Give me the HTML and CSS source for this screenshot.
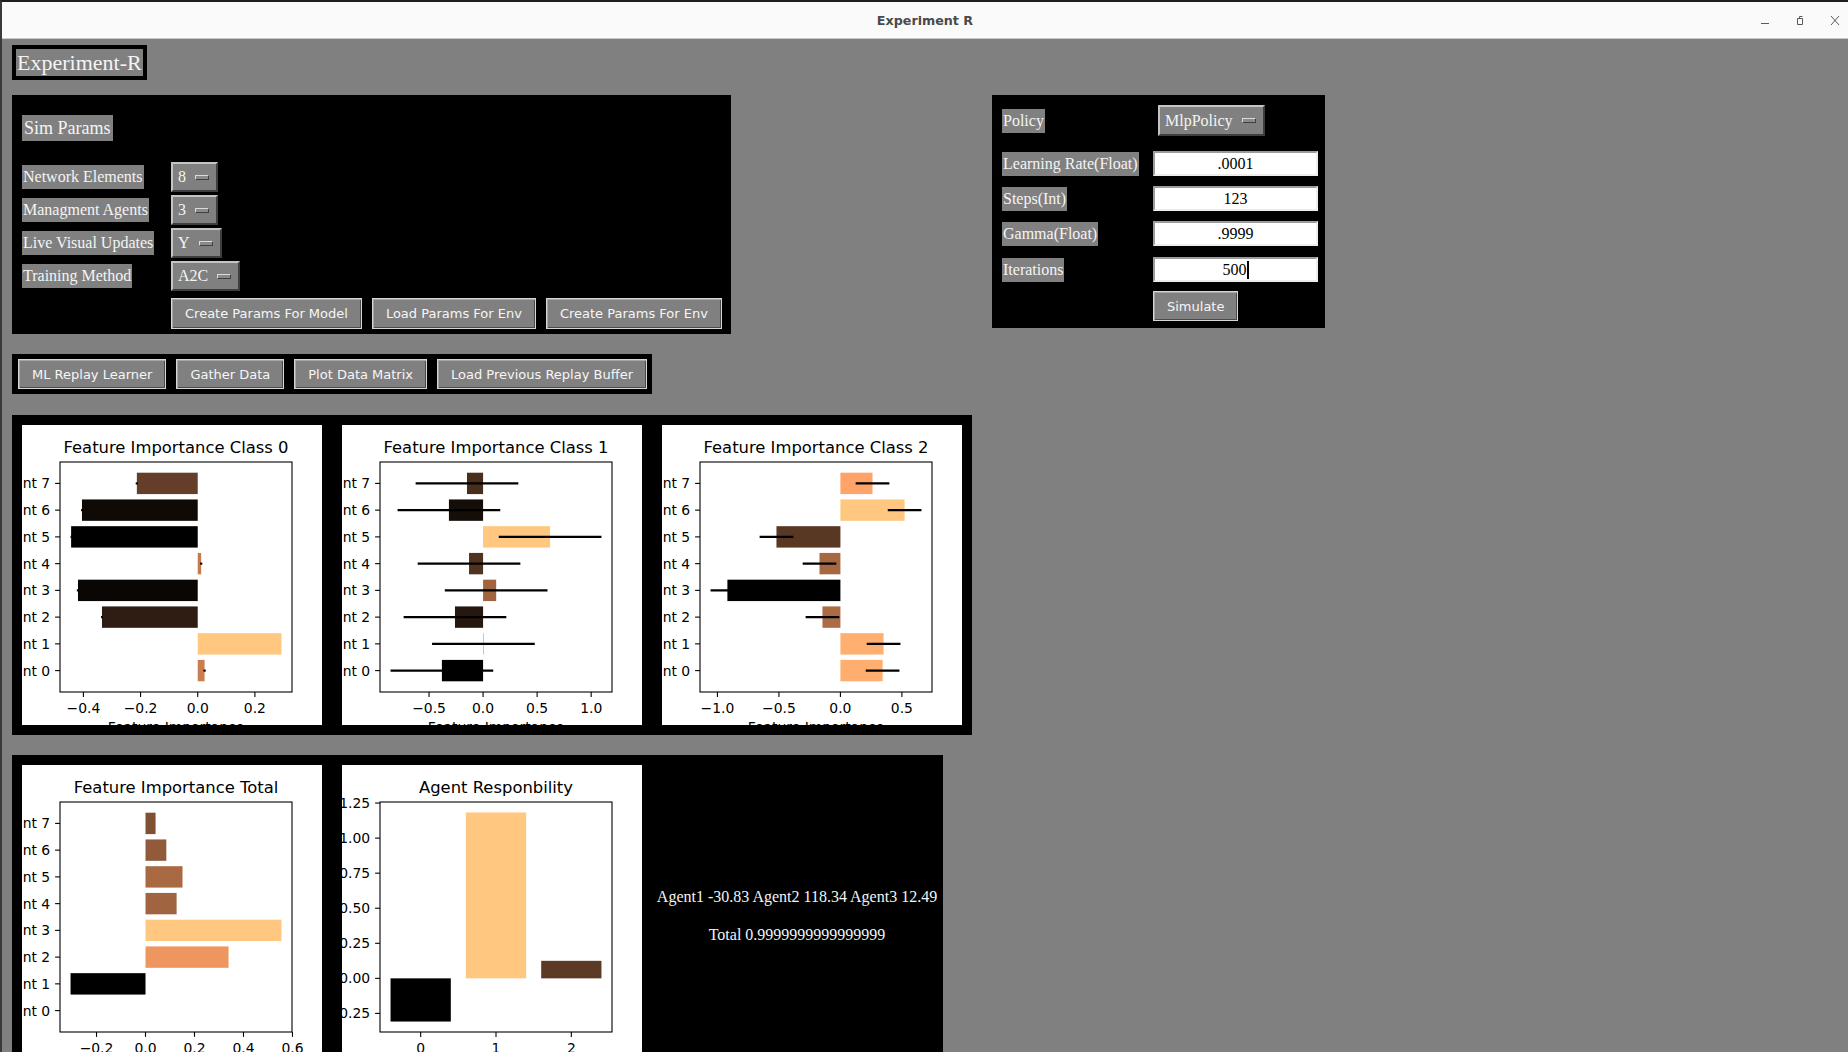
FILE: index.html
```html
<!DOCTYPE html>
<html lang="en">
<head>
<meta charset="utf-8">
<title>Experiment R</title>
<link rel="stylesheet" href="styles.css">
</head>
<body>
<div class="window">
  <header class="titlebar">
    <div class="title">Experiment R</div>
    <div class="wctl">
      <svg class="wc" width="20" height="20" viewBox="0 0 20 20"><path d="M6 13.5H14" stroke="#5a5a5a" stroke-width="1"/></svg>
      <svg class="wc" width="20" height="20" viewBox="0 0 20 20"><path d="M7.5 8.5H12.5V14.5H7.5Z M9.5 8.5V6.5H12.5" fill="none" stroke="#5a5a5a" stroke-width="1"/></svg>
      <svg class="wc" width="20" height="20" viewBox="0 0 20 20"><path d="M6 6L14 15M14 6L6 15" stroke="#5a5a5a" stroke-width="1"/></svg>
    </div>
  </header>
  <main class="app">
    <div class="app-title"><span class="lbl lbl-app">Experiment-R</span></div>

    <div class="top-row">
      <section class="panel sim">
        <div class="lbl lbl-hdr">Sim Params</div>
        <div class="form-row"><div class="cell"><span class="lbl">Network Elements</span></div><div class="opt"><span>8</span><i class="ind"></i></div></div>
        <div class="form-row"><div class="cell"><span class="lbl">Managment Agents</span></div><div class="opt"><span>3</span><i class="ind"></i></div></div>
        <div class="form-row"><div class="cell"><span class="lbl">Live Visual Updates</span></div><div class="opt"><span>Y</span><i class="ind"></i></div></div>
        <div class="form-row"><div class="cell"><span class="lbl">Training Method</span></div><div class="opt"><span>A2C</span><i class="ind"></i></div></div>
        <div class="btn-row">
          <button class="btn">Create Params For Model</button>
          <button class="btn">Load Params For Env</button>
          <button class="btn">Create Params For Env</button>
        </div>
      </section>

      <section class="panel pol">
        <div class="prow"><div class="pcell"><span class="lbl">Policy</span></div><div class="opt opt-pol"><span>MlpPolicy</span><i class="ind"></i></div></div>
        <div class="prow first"><div class="pcell"><span class="lbl">Learning Rate(Float)</span></div><div class="entry">.0001</div></div>
        <div class="prow"><div class="pcell"><span class="lbl">Steps(Int)</span></div><div class="entry">123</div></div>
        <div class="prow"><div class="pcell"><span class="lbl">Gamma(Float)</span></div><div class="entry">.9999</div></div>
        <div class="prow last"><div class="pcell"><span class="lbl">Iterations</span></div><div class="entry focus">500<i class="caret"></i></div></div>
        <button class="btn sim-btn">Simulate</button>
      </section>
    </div>

    <div class="panel btnbar">
      <button class="btn">ML Replay Learner</button>
      <button class="btn">Gather Data</button>
      <button class="btn">Plot Data Matrix</button>
      <button class="btn">Load Previous Replay Buffer</button>
    </div>

    <div class="panel charts">
      <div class="chart"><svg id="c0" width="300" height="300"></svg></div>
      <div class="chart"><svg id="c1" width="300" height="300"></svg></div>
      <div class="chart"><svg id="c2" width="300" height="300"></svg></div>
    </div>

    <div class="panel charts r2">
      <div class="chart"><svg id="c3" width="300" height="300"></svg></div>
      <div class="chart"><svg id="c4" width="300" height="300"></svg></div>
      <div class="agent-info">
        <p>Agent1 -30.83 Agent2 118.34 Agent3 12.49</p>
        <p>Total 0.9999999999999999</p>
      </div>
    </div>
  </main>
</div>
<script src="app.js"></script>
</body>
</html>
```

FILE: styles.css
```css
* { box-sizing: border-box; margin: 0; padding: 0; }
html, body { height: 100%; }
body {
  background: #808080;
  overflow: hidden;
  font-family: "Liberation Serif", "Times New Roman", serif;
}
.window {
  height: 1052px;
  border-top: 2px solid #1e1e1e;
  border-left: 2px solid #3a3a3a;
  display: flex;
  flex-direction: column;
}
.titlebar {
  height: 37px;
  flex: none;
  background: #fafafa;
  border-bottom: 1px solid #c9c9c9;
  display: grid;
  grid-template-columns: 1fr auto 1fr;
  align-items: center;
}
.title {
  grid-column: 2;
  font: bold 12.7px "DejaVu Sans", sans-serif;
  color: #4a4a4a;
}
.wctl {
  grid-column: 3;
  justify-self: end;
  display: flex;
  gap: 15px;
  margin-right: 3px;
}
.wc { display: block; }

.app {
  flex: 1;
  padding: 6px 0 0 10px;
  display: flex;
  flex-direction: column;
  align-items: flex-start;
}
.panel { background: #000; }

.lbl {
  display: inline-block;
  background: #808080;
  color: #f4f4f4;
  font-size: 16px;
  line-height: 18px;
  padding: 3px 1px;
  white-space: nowrap;
}
.app-title { background: #000; padding: 4px; }
.lbl-app { display: block; font-size: 22px; line-height: 27px; padding: 0 1px; }

.top-row {
  display: flex;
  gap: 261px;
  margin-top: 15px;
  align-items: flex-start;
}
.sim {
  width: 719px;
  height: 239px;
  padding: 20px 0 0 10px;
  display: flex;
  flex-direction: column;
  align-items: flex-start;
}
.lbl-hdr {
  font-size: 18px;
  line-height: 20px;
  padding: 3px 2px;
  margin-bottom: 21px;
}
.form-row {
  display: flex;
  align-items: center;
  height: 30px;
  margin-bottom: 3px;
}
.cell { width: 149px; flex: none; }

.opt {
  height: 30px;
  display: flex;
  align-items: center;
  gap: 9px;
  padding: 0 7px 0 5px;
  background: #808080;
  border: 2px solid;
  border-color: #c4c4c4 #3e3e3e #3e3e3e #c4c4c4;
  color: #f4f4f4;
  font-size: 16px;
}
.ind {
  display: block;
  width: 14px;
  height: 5px;
  background: #8a8a8a;
  border: 1px solid;
  border-color: #dadada #404040 #404040 #dadada;
}
.btn-row {
  display: flex;
  gap: 10px;
  margin: 4px 0 0 149px;
}
.btn {
  height: 31px;
  padding: 0 13px;
  background: #808080;
  color: #f6f6f6;
  font: 13px "DejaVu Sans", sans-serif;
  border: 1px solid #d6d6d6;
  box-shadow: inset 1px 1px 0 #a6a6a6, inset -1px -1px 0 #4a4a4a;
  white-space: nowrap;
}

.pol {
  width: 333px;
  height: 233px;
  padding: 10px 0 0 10px;
  display: flex;
  flex-direction: column;
  align-items: flex-start;
}
.prow { display: flex; align-items: center; margin-top: 10px; }
.prow:first-child { margin-top: 0; }
.prow.first { margin-top: 15px; }
.prow.last { margin-top: 11px; }
.pcell { width: 151px; flex: none; }
.opt-pol { height: 31px; margin-left: 5px; }
.entry {
  width: 165px;
  height: 25px;
  background: #fff;
  border: 2px solid;
  border-color: #9c9c9c #ededed #ededed #9c9c9c;
  color: #000;
  font-size: 16px;
  line-height: 21px;
  text-align: center;
}
.caret {
  display: inline-block;
  width: 2px;
  height: 18px;
  background: #000;
  vertical-align: -4px;
}
.sim-btn { height: 30px; margin: 9px 0 0 151px; }

.btnbar {
  margin-top: 20px;
  padding: 5px 5px 5px 6px;
  display: flex;
  gap: 10px;
}
.btnbar .btn { height: 30px; }

.charts {
  margin-top: 21px;
  padding: 10px;
  display: flex;
  gap: 20px;
}
.chart {
  width: 300px;
  height: 300px;
  flex: none;
  background: #fff;
  overflow: hidden;
}
.chart svg { display: block; font-family: "DejaVu Sans", sans-serif; }
.r2 { margin-top: 20px; padding: 10px 1px 10px 10px; }
.agent-info {
  width: 290px;
  height: 300px;
  margin-left: -10px;
  display: flex;
  flex-direction: column;
  justify-content: center;
  align-items: center;
  gap: 19px;
  color: #f4f4f4;
  font-size: 16px;
  line-height: 19px;
  white-space: nowrap;
}
```

FILE: app.js
```js
(function () {
  var NS = 'http://www.w3.org/2000/svg';
  var L = 38, R = 270, T = 37, B = 267, TICK = 4.9, FS = 13.9;

  function el(tag, attrs, parent) {
    var e = document.createElementNS(NS, tag);
    for (var k in attrs) e.setAttribute(k, attrs[k]);
    if (parent) parent.appendChild(e);
    return e;
  }
  function txt(parent, x, y, s, anchor, size) {
    var t = el('text', { x: x, y: y, 'text-anchor': anchor, 'font-size': size, fill: '#000' }, parent);
    t.textContent = s;
    return t;
  }
  function copper(t) {
    var r = Math.min(1, 1.25 * t), g = 0.7812 * t, b = 0.4975 * t;
    return 'rgb(' + Math.round(r * 255) + ',' + Math.round(g * 255) + ',' + Math.round(b * 255) + ')';
  }
  function fmt(v, d) {
    var s = Math.abs(v).toFixed(d);
    return (v < -1e-9 ? '\u2212' : '') + s;
  }
  function frame(svg, title, xlabel) {
    el('rect', { x: L, y: T, width: R - L, height: B - T, fill: 'none', stroke: '#000', 'stroke-width': 1.1 }, svg);
    txt(svg, (L + R) / 2, 27.8, title, 'middle', 16.4);
    if (xlabel) txt(svg, (L + R) / 2, 307, xlabel, 'middle', FS);
  }
  function tick(svg, x1, y1, x2, y2) {
    el('line', { x1: x1, y1: y1, x2: x2, y2: y2, stroke: '#000', 'stroke-width': 1.1 }, svg);
  }

  function barh(id, cfg) {
    var svg = document.getElementById(id);
    var v = cfg.vals, e = cfg.errs || v.map(function () { return 0; });
    var lo = 0, hi = 0, vmin = Infinity, vmax = -Infinity;
    v.forEach(function (x, i) {
      lo = Math.min(lo, x - e[i]); hi = Math.max(hi, x + e[i]);
      vmin = Math.min(vmin, x); vmax = Math.max(vmax, x);
    });
    var m = (hi - lo) * 0.05; lo -= m; hi += m;
    var X = function (x) { return L + (x - lo) / (hi - lo) * (R - L); };
    var unit = (B - T) / 8.6;
    var Y = function (k) { return B - (k + 0.8) * unit; };
    v.forEach(function (x, k) {
      var x0 = X(0), x1 = X(x);
      el('rect', { x: Math.min(x0, x1), y: Y(k + 0.4), width: Math.abs(x1 - x0), height: 0.8 * unit,
        fill: copper((x - vmin) / (vmax - vmin)) }, svg);
    });
    if (cfg.errs) {
      v.forEach(function (x, k) {
        if (e[k] <= 0) return;
        el('line', { x1: X(x - e[k]), x2: X(x + e[k]), y1: Y(k), y2: Y(k), stroke: '#000', 'stroke-width': 2.1 }, svg);
      });
    }
    frame(svg, cfg.title, 'Feature Importance');
    for (var k = 0; k < 8; k++) {
      tick(svg, L - TICK, Y(k), L, Y(k));
      txt(svg, L - 2 * TICK, Y(k) + 5, 'nt ' + k, 'end', FS);
    }
    cfg.ticks.forEach(function (t) {
      tick(svg, X(t), B, X(t), B + TICK);
      txt(svg, X(t), 288, fmt(t, 1), 'middle', FS);
    });
  }

  function vbar(id, cfg) {
    var svg = document.getElementById(id);
    var v = cfg.vals;
    var lo = Math.min.apply(null, v.concat([0])), hi = Math.max.apply(null, v.concat([0]));
    var vmin = Math.min.apply(null, v), vmax = Math.max.apply(null, v);
    var m = (hi - lo) * 0.05; lo -= m; hi += m;
    var Yv = function (y) { return B - (y - lo) / (hi - lo) * (B - T); };
    var xlo = -0.54, xhi = 2.54;
    var X = function (x) { return L + (x - xlo) / (xhi - xlo) * (R - L); };
    v.forEach(function (y, i) {
      var y0 = Yv(0), y1 = Yv(y);
      el('rect', { x: X(i - 0.4), y: Math.min(y0, y1), width: X(i + 0.4) - X(i - 0.4), height: Math.abs(y1 - y0),
        fill: copper((y - vmin) / (vmax - vmin)) }, svg);
    });
    frame(svg, cfg.title, null);
    for (var t = -0.25; t <= 1.2501; t += 0.25) {
      tick(svg, L - TICK, Yv(t), L, Yv(t));
      txt(svg, L - 2 * TICK, Yv(t) + 5, fmt(t, 2), 'end', FS);
    }
    for (var i = 0; i < v.length; i++) {
      tick(svg, X(i), B, X(i), B + TICK);
      txt(svg, X(i), 288, String(i), 'middle', FS);
    }
  }

  barh('c0', {
    title: 'Feature Importance Class 0',
    vals: [0.024, 0.293, -0.335, -0.419, 0.012, -0.443, -0.405, -0.213],
    errs: [0.004, 0, 0.003, 0.004, 0.004, 0.002, 0.003, 0.004],
    ticks: [-0.4, -0.2, 0, 0.2]
  });
  barh('c1', {
    title: 'Feature Importance Class 1',
    vals: [-0.381, 0.003, -0.26, 0.121, -0.13, 0.62, -0.316, -0.149],
    errs: [0.475, 0.475, 0.475, 0.475, 0.475, 0.475, 0.475, 0.475],
    ticks: [-0.5, 0, 0.5, 1.0]
  });
  barh('c2', {
    title: 'Feature Importance Class 2',
    vals: [0.343, 0.351, -0.146, -0.919, -0.17, -0.52, 0.522, 0.261],
    errs: [0.137, 0.137, 0.137, 0.137, 0.137, 0.137, 0.137, 0.137],
    ticks: [-1.0, -0.5, 0, 0.5]
  });
  barh('c3', {
    title: 'Feature Importance Total',
    vals: [0, -0.306, 0.339, 0.555, 0.127, 0.151, 0.085, 0.041],
    ticks: [-0.2, 0, 0.2, 0.4, 0.6]
  });
  vbar('c4', {
    title: 'Agent Responbility',
    vals: [-0.308, 1.183, 0.125]
  });
})();
```
